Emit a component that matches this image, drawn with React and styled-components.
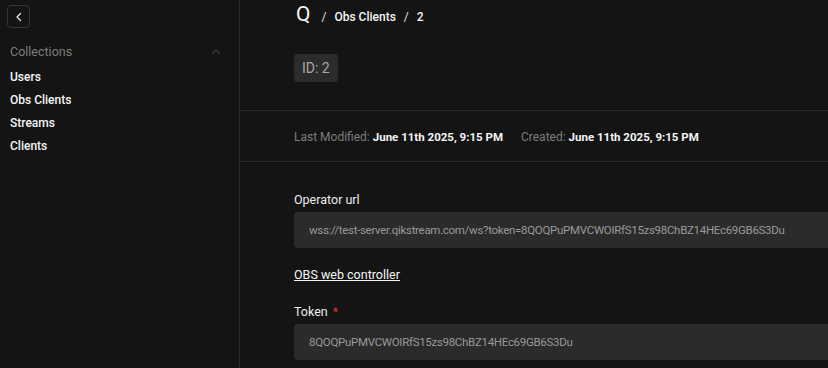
import React from 'react';
import styled, { createGlobalStyle } from 'styled-components';

const GlobalStyle = createGlobalStyle`
	html, body {
		margin: 0;
		padding: 0;
		background: #141414;
		overflow: hidden;
	}
	body {
		font-family: Roboto, "Noto Sans", sans-serif;
		color: #f0f0f0;
	}
`

const collections = ['Users', 'Obs Clients', 'Streams', 'Clients']

function ChevronLeft() {
	return (
		<svg width="12" height="12" viewBox="0 0 24 24" fill="none" stroke="currentColor" strokeWidth="2.5" strokeLinecap="round" strokeLinejoin="round">
			<path d="M15 5l-7 7 7 7" />
		</svg>
	)
}

function ChevronUp() {
	return (
		<svg width="12" height="12" viewBox="0 0 24 24" fill="none" stroke="currentColor" strokeWidth="1.8" strokeLinecap="round" strokeLinejoin="round">
			<path d="M5 15l7-7 7 7" />
		</svg>
	)
}

export default function App() {
	return (
		<Page>
			<GlobalStyle />
			<Sidebar>
				<BackButton><ChevronLeft /></BackButton>
				<GroupHeader>
					<span>Collections</span>
					<ChevronUp />
				</GroupHeader>
				<NavList>
					{collections.map((name) => (
						<NavItem key={name}>{name}</NavItem>
					))}
				</NavList>
			</Sidebar>

			<Main>
				<Header>
					<Crumbs>
						<Logo>Q</Logo>
						<Slash>/</Slash>
						<Crumb>Obs Clients</Crumb>
						<Slash>/</Slash>
						<Crumb>2</Crumb>
					</Crumbs>
					<IdBadge>ID: 2</IdBadge>
				</Header>

				<MetaRow>
					<Meta>Last Modified: <b>June 11th 2025, 9:15 PM</b></Meta>
					<Meta>Created: <b>June 11th 2025, 9:15 PM</b></Meta>
				</MetaRow>

				<Form>
					<Field>
						<Label>Operator url</Label>
						<Input>wss://test-server.qikstream.com/ws?token=8QOQPuPMVCWOIRfS15zs98ChBZ14HEc69GB6S3Du</Input>
					</Field>
					<Link href="#">OBS web controller</Link>
					<Field>
						<Label>Token <Required>*</Required></Label>
						<Input>8QOQPuPMVCWOIRfS15zs98ChBZ14HEc69GB6S3Du</Input>
					</Field>
				</Form>
			</Main>
		</Page>
	)
}

const Page = styled.div`
	display: flex;
	width: 828px;
	height: 368px;
	overflow: hidden;
	background: #141414;
`

const Sidebar = styled.aside`
	display: flex;
	flex-direction: column;
	flex: 0 0 240px;
	box-sizing: border-box;
	border-right: 1px solid #2a2a2a;
	padding: 5px 0 0 7px;
`

const BackButton = styled.div`
	display: flex;
	align-items: center;
	justify-content: center;
	width: 23px;
	height: 23px;
	box-sizing: border-box;
	border: 1px solid #353535;
	border-radius: 4px;
	color: #e8e8e8;
`

const GroupHeader = styled.div`
	display: flex;
	align-items: center;
	justify-content: space-between;
	margin-top: 15px;
	padding: 0 17px 0 3px;
	font-size: 12.5px;
	color: #7c7c7c;
	line-height: 18px;
	svg { color: #5a5a5a; }
`

const NavList = styled.div`
	display: flex;
	flex-direction: column;
	gap: 5px;
	margin-top: 7px;
	padding-left: 3px;
`

const NavItem = styled.div`
	font-size: 12px;
	font-weight: 500;
	line-height: 18px;
	color: #f4f4f4;
`

const Main = styled.main`
	display: flex;
	flex-direction: column;
	flex: 1;
	min-width: 0;
`

const Header = styled.div`
	display: flex;
	flex-direction: column;
	align-items: flex-start;
	padding: 2px 0 0 54px;
	height: 111px;
	box-sizing: border-box;
	border-bottom: 1px solid #2a2a2a;
`

const Crumbs = styled.div`
	display: flex;
	align-items: baseline;
	gap: 8px;
	height: 29px;
`

const Logo = styled.span`
	font-size: 21px;
	color: #f4f4f4;
	margin: 0 3px 0 2px;
`

const Slash = styled.span`
	font-size: 12px;
	color: #e0e0e0;
`

const Crumb = styled.span`
	font-size: 12px;
	font-weight: 500;
	color: #f4f4f4;
`

const IdBadge = styled.div`
	margin-top: 23px;
	padding: 0 8px;
	height: 28px;
	display: flex;
	align-items: center;
	border-radius: 4px;
	background: #2c2c2c;
	color: #a8a8a8;
	font-size: 14px;
`

const MetaRow = styled.div`
	display: flex;
	align-items: center;
	gap: 18px;
	height: 51px;
	box-sizing: border-box;
	padding: 2px 0 0 54px;
	border-bottom: 1px solid #2a2a2a;
`

const Meta = styled.div`
	font-size: 12px;
	color: #7d7d7d;
	b {
		font-size: 11.5px;
		font-weight: 700;
		color: #f4f4f4;
	}
`

const Form = styled.div`
	display: flex;
	flex-direction: column;
	align-items: flex-start;
	padding: 29px 0 0 54px;
	width: 640px;
`

const Field = styled.div`
	display: flex;
	flex-direction: column;
	gap: 3px;
	width: 100%;
`

const Label = styled.label`
	font-size: 12.5px;
	line-height: 18px;
	color: #ececec;
`

const Required = styled.span`
	color: #d33;
	margin-left: 2px;
`

const Input = styled.div`
	display: flex;
	align-items: center;
	height: 36px;
	box-sizing: border-box;
	padding: 0 15px;
	width: 100%;
	border-radius: 4px;
	background: #2b2b2b;
	color: #999;
	font-size: 11.5px;
	letter-spacing: -0.3px;
	white-space: nowrap;
`

const Link = styled.a`
	margin: 18px 0 19px;
	font-size: 12.5px;
	line-height: 18px;
	color: #f4f4f4;
	text-decoration: underline;
`
